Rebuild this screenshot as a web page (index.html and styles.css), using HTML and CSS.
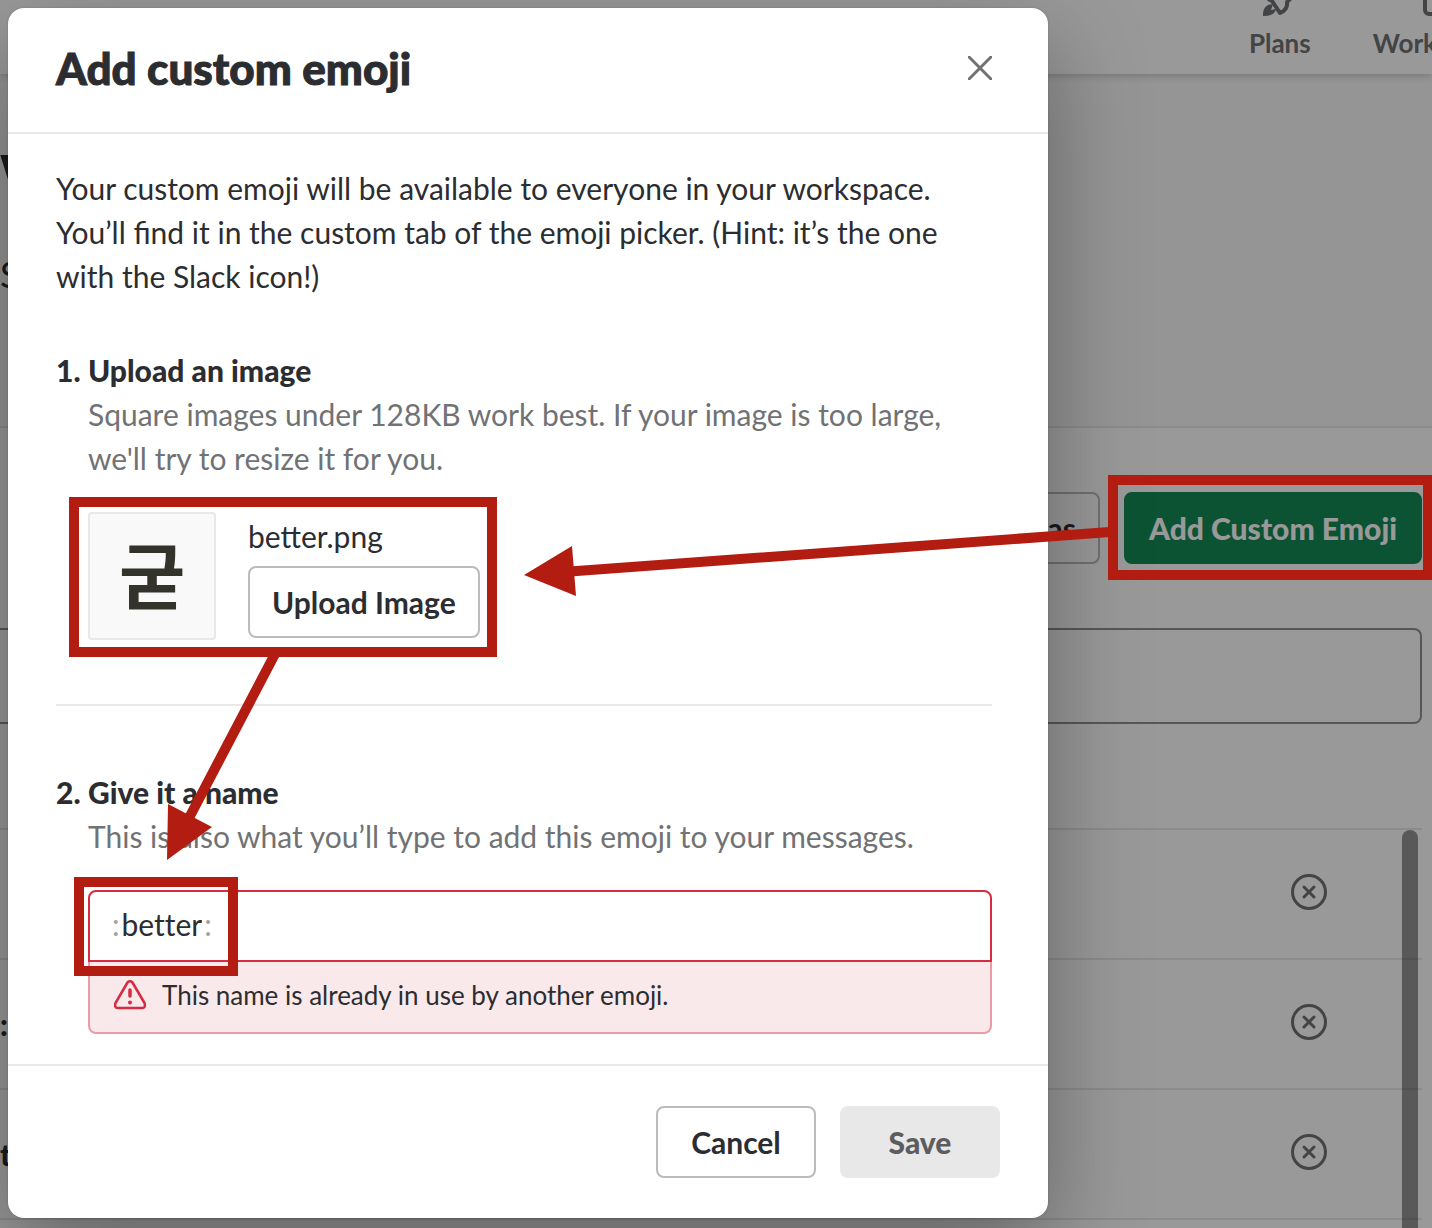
FILE: index.html
```html
<!DOCTYPE html>
<html lang="en">
<head>
<meta charset="utf-8">
<title>Add custom emoji</title>
<link rel="stylesheet" href="styles.css">
</head>
<body>
<div class="page">
  <header class="topbar">
    <nav class="topnav">
      <a class="topnav-link" href="#">
        <svg class="topnav-icon" viewBox="0 0 36 36" aria-hidden="true">
          <path d="M8 19 15 10 23 8 29 2M10 16 20 31Q28 28 27 20L33 14" fill="none" stroke="currentColor" stroke-width="4" stroke-linejoin="round"/>
          <path d="M3 34Q2 23 13 22L11 28 16 27Q15 34 3 34Z" fill="currentColor"/>
        </svg>
        Plans
      </a>
      <a class="topnav-link" href="#">
        <svg class="topnav-icon" viewBox="0 0 36 36" aria-hidden="true">
          <rect x="2" y="4" width="32" height="28" rx="4" fill="none" stroke="currentColor" stroke-width="4"/>
        </svg>
        Workspaces
      </a>
    </nav>
  </header>
  <section class="hero">
    <h1 class="hero-title">W</h1>
    <p class="hero-text">S</p>
  </section>
  <main class="content">
    <div class="actions">
      <button class="btn" type="button">Add Alias</button>
      <button class="btn btn-primary" type="button">Add Custom Emoji</button>
    </div>
    <input class="search" type="search" aria-label="Search emoji">
    <div class="list">
      <table class="emoji-table">
        <tr><td></td><td class="cell-action"><button class="delete" type="button" aria-label="Delete"><svg viewBox="0 0 36 36"><use href="#delete-icon"/></svg></button></td></tr>
        <tr><td>:</td><td class="cell-action"><button class="delete" type="button" aria-label="Delete"><svg viewBox="0 0 36 36"><use href="#delete-icon"/></svg></button></td></tr>
        <tr><td>t</td><td class="cell-action"><button class="delete" type="button" aria-label="Delete"><svg viewBox="0 0 36 36"><use href="#delete-icon"/></svg></button></td></tr>
        <tr><td></td><td></td></tr>
      </table>
      <div class="scroll-thumb"></div>
    </div>
  </main>
</div>

<div class="overlay">
  <div class="modal" role="dialog" aria-labelledby="modal-title">
    <header class="modal-header">
      <h2 class="modal-title" id="modal-title">Add custom emoji</h2>
      <button class="close" type="button" aria-label="Close">
        <svg viewBox="0 0 24 24"><path d="M1 1 23 23M23 1 1 23" fill="none" stroke="currentColor" stroke-width="3" stroke-linecap="round"/></svg>
      </button>
    </header>
    <div class="modal-body">
      <p class="intro">Your custom emoji will be available to everyone in your workspace. You’ll find it in the custom tab of the emoji picker. (Hint: it’s the one with the Slack icon!)</p>
      <section class="step">
        <span class="step-number">1.</span>
        <div class="step-content">
          <h3 class="step-title">Upload an image</h3>
          <p class="step-text">Square images under 128KB work best. If your image is too large, we'll try to resize it for you.</p>
          <div class="upload">
            <div class="preview" lang="ko">굳</div>
            <div class="upload-side">
              <span class="file-name">better.png</span>
              <button class="btn" type="button">Upload Image</button>
            </div>
          </div>
        </div>
      </section>
      <hr class="divider">
      <section class="step">
        <span class="step-number">2.</span>
        <div class="step-content">
          <label class="step-title" for="emoji-name">Give it a name</label>
          <p class="step-text">This is also what you’ll type to add this emoji to your messages.</p>
          <div class="name-field">
            <span>:</span><input class="name-input" id="emoji-name" type="text" value="better"><span>:</span>
          </div>
          <div class="error" role="alert">
            <svg class="error-icon" viewBox="0 0 32 30" aria-hidden="true">
              <path d="M13.500 2.500Q16 0 18.500 2.500L30.500 23Q32 28 28 28H4Q0 28 1.500 23Z" fill="none" stroke="currentColor" stroke-width="2.500" stroke-linejoin="round"/>
              <path d="M16 10V16" stroke="currentColor" stroke-width="3.500" stroke-linecap="round"/>
              <circle cx="16" cy="22.500" r="2" fill="currentColor"/>
            </svg>
            This name is already in use by another emoji.
          </div>
        </div>
      </section>
    </div>
    <footer class="modal-footer">
      <button class="btn btn-wide" type="button">Cancel</button>
      <button class="btn btn-wide btn-disabled" type="button" disabled>Save</button>
    </footer>
  </div>
</div>

<svg class="annotations" width="1432" height="1228" viewBox="0 0 1432 1228" aria-hidden="true">
  <g fill="none" stroke="#b21c11" stroke-width="10">
    <rect x="74" y="502" width="418" height="150"/>
    <rect x="1113" y="480" width="315" height="95"/>
    <rect x="79" y="882" width="154" height="89"/>
    <path d="M1110 532 570 571.500M275 654 189 818"/>
  </g>
  <path d="M524 575 572 546 576 596ZM167 860 168 804 212 827Z" fill="#b21c11"/>
</svg>

<svg class="symbols" aria-hidden="true">
  <symbol id="delete-icon" viewBox="0 0 36 36">
    <circle cx="18" cy="18" r="16.500" fill="none" stroke="currentColor" stroke-width="3"/>
    <path d="M13 13 23 23M23 13 13 23" fill="none" stroke="currentColor" stroke-width="3" stroke-linecap="round"/>
  </symbol>
</svg>
</body>
</html>
```
FILE: styles.css
```css
* {
  box-sizing: border-box;
}

body {
  margin: 0;
  font-family: Lato, "Noto Sans CJK KR", sans-serif;
  font-size: 30px;
  line-height: 44px;
  color: #2c2d30;
}

h1, h2, h3, p {
  margin: 0;
}

button, input {
  font: inherit;
  color: inherit;
}

.page {
  height: 100vh;
  overflow: hidden;
  background: #fff;
}

.topbar {
  position: relative;
  display: flex;
  justify-content: flex-end;
  align-items: flex-end;
  height: 74px;
  padding-bottom: 14px;
  box-shadow: 0 2px 8px rgba(0, 0, 0, 0.2);
}

.topnav {
  display: flex;
  gap: 62px;
  margin-right: -82px;
}

.topnav-link {
  display: flex;
  flex-direction: column;
  align-items: center;
  gap: 8px;
  font-size: 26px;
  line-height: 34px;
  font-weight: 700;
  color: #717274;
  text-decoration: none;
}

.topnav-icon {
  width: 36px;
  height: 36px;
  margin-right: 4px;
}

.hero {
  height: 354px;
  padding-top: 66px;
  background: #f9f9f9;
  border-bottom: 2px solid #e8e8e8;
}

.hero-title {
  font-size: 56px;
  line-height: 68px;
  font-weight: 900;
}

.hero-text {
  padding-top: 44px;
  font-size: 36px;
}

.content {
  padding: 64px 10px 0 0;
}

.actions {
  display: flex;
  justify-content: flex-end;
  gap: 24px;
}

.btn {
  height: 72px;
  padding: 0 22px;
  border: 2px solid #bbb;
  border-radius: 8px;
  background: #fff;
  font-weight: 700;
  line-height: 44px;
  white-space: nowrap;
}

.btn-primary {
  padding: 0 23px;
  border-color: #148a56;
  background: #148a56;
  color: #fff;
  font-weight: 900;
}

.search {
  display: block;
  width: 100%;
  height: 96px;
  margin-top: 64px;
  border: 2px solid #919193;
  border-left: 0;
  border-radius: 0 8px 8px 0;
  background: transparent;
}

.list {
  position: relative;
  margin-top: 104px;
}

.emoji-table {
  width: 100%;
  border-collapse: collapse;
  font-weight: 900;
}

.emoji-table td {
  height: 130px;
  padding: 0;
  border-top: 2px solid #e8e8e8;
}

.emoji-table .cell-action {
  width: 131px;
  padding-bottom: 4px;
}

.delete {
  display: block;
  width: 36px;
  height: 36px;
  padding: 0;
  border: 0;
  background: none;
  color: #717274;
}

.delete svg {
  display: block;
}

.scroll-thumb {
  position: absolute;
  top: 2px;
  right: 4px;
  bottom: 0;
  width: 16px;
  border-radius: 8px;
  background: rgba(0, 0, 0, 0.42);
}

.overlay {
  position: absolute;
  inset: 0;
  overflow: hidden;
  padding: 8px;
  background: rgba(0, 0, 0, 0.4);
}

.modal {
  max-width: 1040px;
  border-radius: 16px;
  background: #fff;
  box-shadow: 0 36px 96px rgba(0, 0, 0, 0.35), 0 0 2px rgba(0, 0, 0, 0.2);
}

.modal-header {
  display: flex;
  justify-content: space-between;
  align-items: center;
  padding: 28px 56px 32px 48px;
  border-bottom: 2px solid #e8e8e8;
}

.modal-title {
  font-size: 44px;
  line-height: 64px;
  font-weight: 900;
  -webkit-text-stroke: 1px;
}

.close {
  width: 24px;
  height: 24px;
  padding: 0;
  border: 0;
  background: none;
  color: #717274;
}

.close svg {
  display: block;
}

.modal-body {
  padding: 32px 56px 30px 48px;
}

.intro {
  padding-bottom: 50px;
}

.step {
  display: flex;
}

.step-number {
  flex: 0 0 32px;
  font-weight: 900;
}

.step-content {
  flex: 1;
}

.step-title {
  display: block;
  font-size: 30px;
  font-weight: 900;
}

.step-text {
  color: #717274;
}

.upload {
  display: flex;
  gap: 32px;
  margin-top: 32px;
}

.preview {
  width: 128px;
  height: 128px;
  border: 2px solid #e8e8e8;
  border-radius: 4px;
  background: #f9f9f9;
  color: #33322b;
  font-family: "Noto Sans CJK KR", sans-serif;
  font-size: 72px;
  font-weight: 700;
  line-height: 116px;
  text-align: center;
}

.upload-side {
  display: flex;
  flex-direction: column;
  gap: 8px;
  padding-top: 2px;
}

.divider {
  margin: 64px 0;
  border: 0;
  border-top: 2px solid #e8e8e8;
}

.name-field {
  display: flex;
  align-items: center;
  gap: 2px;
  height: 72px;
  margin-top: 32px;
  padding: 0 22px 4px;
  border: 2px solid #d72b3f;
  border-radius: 8px 8px 0 0;
  color: #a0a0a2;
}

.name-input {
  field-sizing: content;
  padding: 0;
  border: 0;
  outline: 0;
  background: none;
  color: #2c2d30;
  font-variant-ligatures: none;
}

.error {
  display: flex;
  align-items: center;
  gap: 16px;
  height: 72px;
  padding: 0 24px 4px;
  border: 2px solid #eb9ba4;
  border-top: 0;
  border-radius: 0 0 8px 8px;
  background: #fae9eb;
  font-size: 26px;
}

.error-icon {
  width: 32px;
  height: 30px;
  color: #d72b3f;
}

.modal-footer {
  display: flex;
  justify-content: flex-end;
  gap: 24px;
  padding: 40px 48px;
  border-top: 2px solid #e8e8e8;
}

.btn-wide {
  width: 160px;
}

.btn-disabled {
  border-color: #e8e8e8;
  background: #e8e8e8;
  color: #5c5d5f;
  font-weight: 900;
}

.annotations {
  position: absolute;
  top: 0;
  left: 0;
}

.symbols {
  position: absolute;
  width: 0;
  height: 0;
}
```
